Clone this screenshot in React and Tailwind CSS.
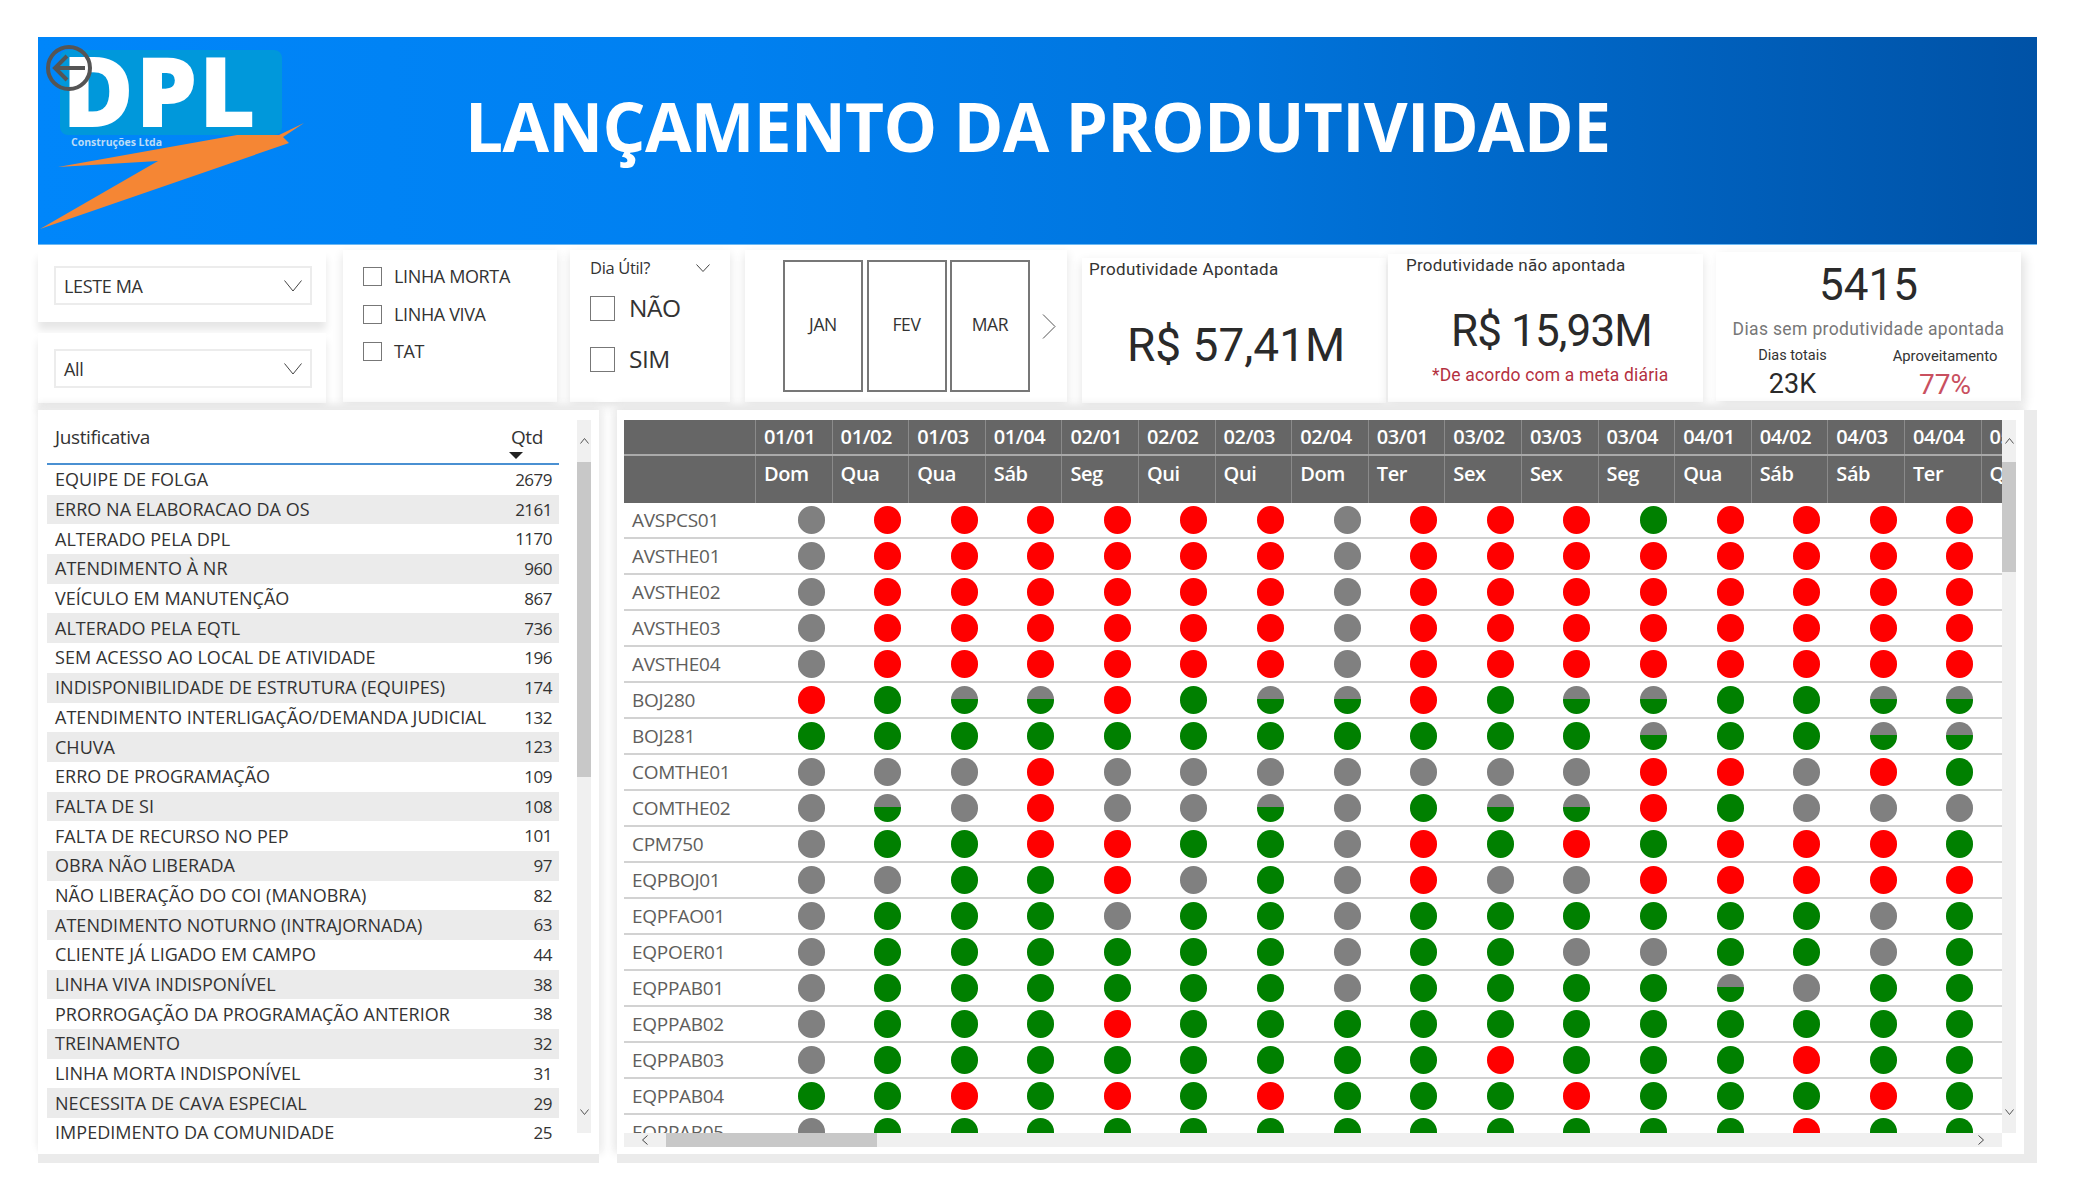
const JUST = [["EQUIPE DE FOLGA",2679],["ERRO NA ELABORACAO DA OS",2161],["ALTERADO PELA DPL",1170],["ATENDIMENTO À NR",960],["VEÍCULO EM MANUTENÇÃO",867],["ALTERADO PELA EQTL",736],["SEM ACESSO AO LOCAL DE ATIVIDADE",196],["INDISPONIBILIDADE DE ESTRUTURA (EQUIPES)",174],["ATENDIMENTO INTERLIGAÇÃO/DEMANDA JUDICIAL",132],["CHUVA",123],["ERRO DE PROGRAMAÇÃO",109],["FALTA DE SI",108],["FALTA DE RECURSO NO PEP",101],["OBRA NÃO LIBERADA",97],["NÃO LIBERAÇÃO DO COI (MANOBRA)",82],["ATENDIMENTO NOTURNO (INTRAJORNADA)",63],["CLIENTE JÁ LIGADO EM CAMPO",44],["LINHA VIVA INDISPONÍVEL",38],["PRORROGAÇÃO DA PROGRAMAÇÃO ANTERIOR",38],["TREINAMENTO",32],["LINHA MORTA INDISPONÍVEL",31],["NECESSITA DE CAVA ESPECIAL",29],["IMPEDIMENTO DA COMUNIDADE",25]];
const COLS = [["01/01","Dom"],["01/02","Qua"],["01/03","Qua"],["01/04","Sáb"],["02/01","Seg"],["02/02","Qui"],["02/03","Qui"],["02/04","Dom"],["03/01","Ter"],["03/02","Sex"],["03/03","Sex"],["03/04","Seg"],["04/01","Qua"],["04/02","Sáb"],["04/03","Sáb"],["04/04","Ter"],["05/01","Qua"]];
const ROWS = [["AVSPCS01","GRRRRRRGRRRVRRRR"],["AVSTHE01","GRRRRRRGRRRRRRRR"],["AVSTHE02","GRRRRRRGRRRRRRRR"],["AVSTHE03","GRRRRRRGRRRRRRRR"],["AVSTHE04","GRRRRRRGRRRRRRRR"],["BOJ280","RVHHRVHHRVHHVVHH"],["BOJ281","VVVVVVVVVVVHVVHH"],["COMTHE01","GGGRGGGGGGGRRGRV"],["COMTHE02","GHGRGGHGVHHRVGGG"],["CPM750","GVVRRVVGRVRVRRRV"],["EQPBOJ01","GGVVRGVGRGGRRRRR"],["EQPFAO01","GVVVGVVGVVVVVVGV"],["EQPOER01","GVVVVVVGVVGGVVGV"],["EQPPAB01","GVVVVVVGVVVVHGVV"],["EQPPAB02","GVVVRVVVVVVVVVVV"],["EQPPAB03","GVVVVVVVVRVVVRVV"],["EQPPAB04","VVRVRVRVVVRVVVRV"],["EQPPAB05","GVVVVVVVVVVVVRVV"]];

const SEGOE = "font-['Open_Sans',sans-serif]";
const DIN = "font-['Roboto',sans-serif]";

function Chev({ w, h, points, color = "#444", sw = 1 }) {
  return (
    <svg width={w} height={h} viewBox={`0 0 ${w} ${h}`} className="block flex-none">
      <polyline points={points} fill="none" stroke={color} strokeWidth={sw} />
    </svg>
  );
}

function Dropdown({ label }) {
  return (
    <div className="flex h-[39px] w-[258px] items-center justify-between border-2 border-[#ececec] pl-[8px] pr-[8px]">
      <span className="pt-[2px] text-[18px] tracking-[-0.02em] text-[#333]">{label}</span>
      <Chev w={18} h={12} points="0.5,0.5 9,11 17.5,0.5" />
    </div>
  );
}

function Dot({ k }) {
  const cls = {
    G: "bg-[#808080]",
    R: "bg-[#ff0000]",
    V: "bg-[#008000]",
    H: "bg-[linear-gradient(#808080_0%,#808080_48%,#008000_48%,#008000_100%)]",
  }[k];
  return <div className={`h-[28px] w-[27px] rounded-full ${cls}`} />;
}

function VScroll({ thumb }) {
  return (
    <div className="flex h-[713px] w-[14px] flex-none flex-col bg-[#f0f0f0]">
      <div className="flex h-[42px] flex-none items-center justify-center">
        <Chev w={9} h={6} points="0.5,5.5 4.5,0.5 8.5,5.5" color="#555" />
      </div>
      <div className={`flex-none bg-[#c8c8c8] ${thumb}`} />
      <div className="flex flex-1 items-end justify-center pb-[18px]">
        <Chev w={9} h={6} points="0.5,0.5 4.5,5.5 8.5,0.5" color="#555" />
      </div>
    </div>
  );
}

export default function App() {
  return (
    <div className={`h-[1200px] w-[2075px] overflow-hidden bg-white pl-[38px] pt-[37px] ${SEGOE}`}>
      {/* Header */}
      <div className="relative flex h-[208px] w-[1999px] items-start border-b border-[#6db8f2] bg-[linear-gradient(90deg,#0086fa_0%,#0080f0_35%,#0074dc_60%,#0052a6_100%)]">
        <div className="relative h-[207px] w-[429px] flex-none overflow-hidden">
          <div className="absolute left-[22px] top-[13px] h-[85px] w-[222px] rounded-[8px] bg-[#0098db]" />
          <svg width="429" height="208" viewBox="0 0 429 208" className="absolute left-0 top-0">
            <polygon points="2,192 120,124 20,130 199,98 241,98 266,86 245,100 251,106" fill="#f58634" />
          </svg>
          <span className="absolute left-[24px] top-[3px] whitespace-nowrap text-[98px] font-extrabold leading-[98px] tracking-[0.015em] text-white">DPL</span>
          <span className="absolute left-[33px] top-[97px] whitespace-nowrap text-[10.5px] font-bold leading-[16px] text-[#bcdcf6]">Construções Ltda</span>
          <svg width="46" height="46" viewBox="0 0 46 46" className="absolute left-[8px] top-[8px]">
            <circle cx="23" cy="23" r="21" fill="none" stroke="#555" strokeWidth="4" />
            <path d="M39 23H10M21 11 9 23l12 12" fill="none" stroke="#555" strokeWidth="4" />
          </svg>
        </div>
        <h1 className="ml-[-2px] mt-[49px] whitespace-nowrap text-[67.5px] font-bold leading-[80px] tracking-[-0.01em] text-white">LANÇAMENTO DA PRODUTIVIDADE</h1>
      </div>

      {/* Top row of cards */}
      <div className="flex h-[165px] w-[1999px] items-start">
        <div className="flex w-[288px] flex-none flex-col">
          <div className="mt-[5px] h-[72px] bg-white pl-[16px] pt-[16px] shadow-[0_8px_8px_#e6e6e6]">
            <Dropdown label="LESTE MA" />
          </div>
          <div className="mt-[11px] h-[70px] bg-white pl-[16px] pt-[16px] shadow-[0_8px_8px_#e6e6e6]">
            <Dropdown label="All" />
          </div>
        </div>

        <div className="ml-[17px] mt-[5px] flex h-[152px] w-[214px] flex-none flex-col gap-[18.5px] bg-white pl-[20px] pt-[17px] shadow-[0_4px_10px_#e2e2e2]">
          {["LINHA MORTA", "LINHA VIVA", "TAT"].map((t) => (
            <div key={t} className="flex h-[19px] items-center gap-[12px]">
              <div className="h-[19px] w-[19px] border border-[#777]" />
              <span className="text-[18px] tracking-[-0.02em] text-[#333]">{t}</span>
            </div>
          ))}
        </div>

        <div className="ml-[13px] mt-[5px] h-[152px] w-[160px] flex-none bg-white pl-[20px] pt-[6px] shadow-[0_4px_10px_#e2e2e2]">
          <div className="flex h-[24px] items-center justify-between pr-[20px]">
            <span className="text-[16.5px] tracking-[-0.02em] text-[#333]">Dia Útil?</span>
            <Chev w={14} h={8} points="0.5,0.5 7,7.5 13.5,0.5" />
          </div>
          <div className="mt-[16px] flex flex-col gap-[26px]">
            {["NÃO", "SIM"].map((t) => (
              <div key={t} className="flex h-[25px] items-center gap-[14px]">
                <div className="h-[25px] w-[25px] border border-[#777]" />
                <span className="text-[24.5px] tracking-[-0.02em] text-[#333]">{t}</span>
              </div>
            ))}
          </div>
        </div>

        <div className="ml-[15px] mt-[5px] flex h-[152px] w-[322px] flex-none items-center gap-[3.5px] bg-white pl-[38px] shadow-[0_4px_10px_#e2e2e2]">
          {["JAN", "FEV", "MAR"].map((t) => (
            <div key={t} className="flex h-[132px] w-[80px] items-center justify-center border-2 border-[#777] pb-[3px] text-[17.5px] tracking-[-0.02em] text-[#333]">{t}</div>
          ))}
          <div className="ml-[8px]">
            <Chev w={14} h={25} points="1,0.5 13,12.5 1,24.5" color="#555" />
          </div>
        </div>

        <div className={`ml-[15px] mt-[13px] h-[145px] w-[304px] flex-none bg-white pl-[7px] pt-[1px] shadow-[0_4px_10px_#e2e2e2] ${DIN}`}>
          <div className="text-[17px] leading-[20px] tracking-[0.02em] text-[#333]">Produtividade Apontada</div>
          <div className="mt-[39px] whitespace-nowrap pl-[38px] text-[46px] leading-[54px] text-[#2a2a2a]">R$ 57,41M</div>
        </div>

        <div className={`ml-[2px] mt-[9px] h-[148px] w-[315px] flex-none bg-white pl-[18px] pt-[1px] shadow-[0_4px_10px_#e2e2e2] ${DIN}`}>
          <div className="text-[17px] leading-[20px] tracking-[0.015em] text-[#333]">Produtividade não apontada</div>
          <div className="mt-[29px] whitespace-nowrap pl-[45px] text-[44px] leading-[54px] tracking-[-0.02em] text-[#2a2a2a]">R$ 15,93M</div>
          <div className="mt-[5px] whitespace-nowrap pl-[26px] text-[17.5px] leading-[24px] tracking-[0.01em] text-[#b4313f]">*De acordo com a meta diária</div>
        </div>

        <div className={`ml-[13px] mt-[7px] flex h-[149px] w-[305px] flex-none flex-col items-center bg-white shadow-[4px_4px_10px_#e2e2e2] ${DIN}`}>
          <div className="mt-[6px] text-[44px] leading-[54px] text-[#2a2a2a]">5415</div>
          <div className="mt-[5px] whitespace-nowrap text-[17.5px] leading-[24px] tracking-[0.02em] text-[#777]">Dias sem produtividade apontada</div>
          <div className="mt-[3px] flex w-full">
            <div className="flex w-[148px] flex-col items-center pl-[5px]">
              <div className="text-[14.5px] leading-[24px] text-[#333]">Dias totais</div>
              <div className="text-[27px] leading-[33px] text-[#2a2a2a]">23K</div>
            </div>
            <div className="ml-[14px] flex w-[134px] flex-col items-center">
              <div className="text-[14.8px] leading-[24px] text-[#333]">Aproveitamento</div>
              <div className="text-[28px] leading-[33px] text-[#c9505f]">77%</div>
            </div>
          </div>
        </div>
      </div>

      {/* Bottom row */}
      <div className="flex h-[745px] w-[1999px] items-start">
        <div className="flex h-[744px] w-[561px] flex-none bg-white pl-[9px] pt-[10px] shadow-[0_9px_0_#ebebeb,4px_0_8px_#eeeeee,0_-6px_8px_#e8e8e8]">
          <div className="w-[512px] flex-none">
            <div className="relative flex h-[45px] justify-between border-b-2 border-[#4a90d2] pl-[8px] pr-[16px] pt-[4px] text-[19px] leading-[26px] tracking-[-0.02em] text-[#333]">
              <span>Justificativa</span>
              <span>Qtd</span>
              <div className="absolute bottom-[4px] right-[36px] h-0 w-0 border-x-[7px] border-t-[7px] border-x-transparent border-t-[#222]" />
            </div>
            {JUST.map(([n, q], i) => (
              <div key={n} className={`flex h-[29.7px] items-center justify-between pl-[8px] pr-[7px] text-[#333] ${i % 2 ? "bg-[#ebebeb]" : "bg-white"}`}>
                <span className="whitespace-nowrap text-[18px] tracking-[0.002em]">{n}</span>
                <span className="text-[17px] tracking-[-0.03em]">{q}</span>
              </div>
            ))}
          </div>
          <div className="ml-[18px]">
            <VScroll thumb="h-[315px]" />
          </div>
        </div>

        <div className="ml-[18px] h-[744px] w-[1407px] flex-none bg-white pl-[7px] pt-[10px] shadow-[0_9px_0_#ebebeb,13px_0_0_#ebebeb,13px_9px_0_#ebebeb,0_-6px_8px_#e8e8e8,-4px_0_8px_#eeeeee]">
          <div className="flex">
            <div className="flex w-[1378px] flex-none flex-col">
              <div className="h-[713px] overflow-hidden">
                <div className="flex h-[83px] w-[1600px] flex-col bg-[#666] text-[20px] font-semibold tracking-[-0.02em] text-white">
                  <div className="flex h-[36px] border-b-2 border-[#aaa]">
                    <div className="w-[132px] flex-none border-r border-[#8a8a8a]" />
                    {COLS.map(([d]) => (
                      <div key={d} className="flex w-[76.6px] flex-none items-center border-r border-[#8a8a8a] pl-[8px]">{d}</div>
                    ))}
                  </div>
                  <div className="flex flex-1">
                    <div className="w-[132px] flex-none border-r border-[#8a8a8a]" />
                    {COLS.map(([d, w]) => (
                      <div key={d} className="flex w-[76.6px] flex-none items-start border-r border-[#8a8a8a] pl-[8px] pt-[3px]">{w}</div>
                    ))}
                  </div>
                </div>
                {ROWS.map(([name, vals]) => (
                  <div key={name} className="flex h-[36px] w-[1378px] items-center border-b-2 border-[#d2d2d2]">
                    <div className="w-[132px] flex-none pl-[8px] text-[19px] tracking-[-0.015em] text-[#605e5c]">{name}</div>
                    {vals.split("").map((k, i) => (
                      <div key={i} className="w-[76.6px] flex-none pl-[41.5px]">
                        <Dot k={k} />
                      </div>
                    ))}
                  </div>
                ))}
              </div>
              <div className="flex h-[14px] items-center bg-[#f0f0f0]">
                <div className="flex h-[14px] w-[42px] flex-none items-center justify-center">
                  <Chev w={6} h={10} points="5.5,0.5 0.5,5 5.5,9.5" color="#444" />
                </div>
                <div className="h-[14px] w-[211px] flex-none bg-[#c8c8c8]" />
                <div className="flex flex-1 justify-end pr-[18px]">
                  <Chev w={6} h={10} points="0.5,0.5 5.5,5 0.5,9.5" color="#444" />
                </div>
              </div>
            </div>
            <VScroll thumb="h-[110px]" />
          </div>
        </div>
      </div>
    </div>
  );
}
